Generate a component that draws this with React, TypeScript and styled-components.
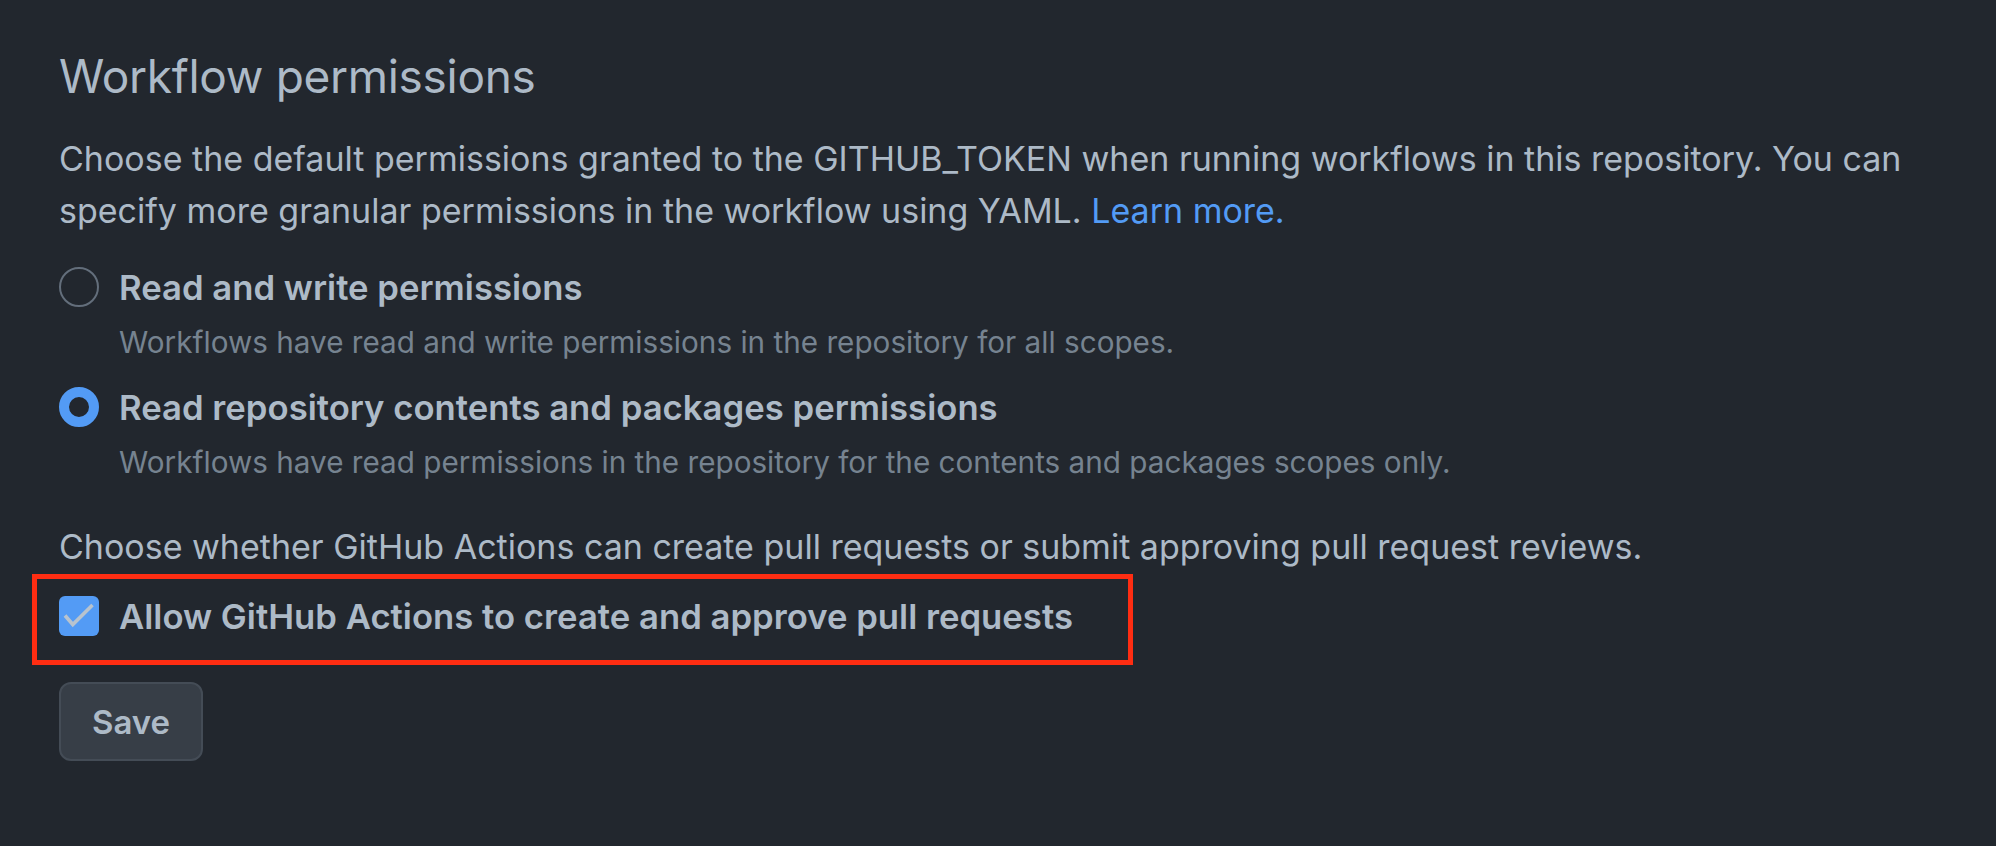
import React, { useState } from "react";
import styled, { createGlobalStyle } from "styled-components";

const COLORS = {
  bg: "#22272e",
  fg: "#adbac7",
  muted: "#768390",
  accent: "#539bf5",
  border: "#444c56",
  btn: "#373e47",
  annotate: "#ff2d12",
};

const GlobalStyle = createGlobalStyle`
  html, body {
    margin: 0;
    padding: 0;
    background: ${COLORS.bg};
  }
  body {
    font-family: Inter, "Noto Sans", "Liberation Sans", sans-serif;
    color: ${COLORS.fg};
    min-height: 846px;
  }
`;

const options = [
  {
    id: "write",
    label: "Read and write permissions",
    note: "Workflows have read and write permissions in the repository for all scopes.",
  },
  {
    id: "read",
    label: "Read repository contents and packages permissions",
    note: "Workflows have read permissions in the repository for the contents and packages scopes only.",
  },
];

export default function App() {
  const [permission, setPermission] = useState("read");
  const [allowPr, setAllowPr] = useState(true);

  return (
    <>
      <GlobalStyle />
      <Page>
        <Title>Workflow permissions</Title>
        <Description>
          Choose the default permissions granted to the GITHUB_TOKEN when running workflows in this
          repository. You can specify more granular permissions in the workflow using YAML.{" "}
          <Link href="#">Learn more.</Link>
        </Description>

        <RadioGroup>
          {options.map((opt) => (
            <Option key={opt.id} $first={opt.id === "write"}>
              <OptionRow onClick={() => setPermission(opt.id)}>
                <Radio $checked={permission === opt.id} />
                <OptionLabel>{opt.label}</OptionLabel>
              </OptionRow>
              <Note>{opt.note}</Note>
            </Option>
          ))}
        </RadioGroup>

        <Description $gap={37}>
          Choose whether GitHub Actions can create pull requests or submit approving pull request reviews.
        </Description>

        <Highlight>
          <CheckRow onClick={() => setAllowPr(!allowPr)}>
            <Checkbox $checked={allowPr}>
              {allowPr && (
                <svg width="40" height="40" viewBox="0 0 40 40">
                  <path
                    d="M6 19.5 L13.8 28.5 L33.5 9"
                    fill="none"
                    stroke="#b8c3ce"
                    strokeWidth="3.6"
                  />
                </svg>
              )}
            </Checkbox>
            <OptionLabel>Allow GitHub Actions to create and approve pull requests</OptionLabel>
          </CheckRow>
        </Highlight>

        <SaveButton>Save</SaveButton>
      </Page>
    </>
  );
}

const Page = styled.main`
  display: flex;
  flex-direction: column;
  align-items: flex-start;
  padding: 45px 59px 0 59px;
  max-width: 1878px;
`;

const Title = styled.h2`
  margin: 0;
  font-size: 46px;
  line-height: 62px;
  font-weight: 400;
  letter-spacing: -0.3px;
`;

const Description = styled.p<{ $gap?: number }>`
  margin: ${(p) => p.$gap ?? 26}px 0 0 0;
  font-size: 34px;
  line-height: 52px;
`;

const Link = styled.a`
  color: ${COLORS.accent};
  text-decoration: none;
`;

const RadioGroup = styled.div`
  display: flex;
  flex-direction: column;
  margin-top: 24px;
`;

const Option = styled.div<{ $first?: boolean }>`
  display: flex;
  flex-direction: column;
  margin-top: ${(p) => (p.$first ? 0 : 17)}px;
`;

const OptionRow = styled.label`
  display: flex;
  align-items: center;
  gap: 20px;
  cursor: pointer;
`;

const Radio = styled.span<{ $checked: boolean }>`
  box-sizing: border-box;
  flex: none;
  width: 40px;
  height: 40px;
  border-radius: 50%;
  background: ${COLORS.bg};
  border: ${(p) => (p.$checked ? `10px solid ${COLORS.accent}` : "2px solid #636e7b")};
`;

const OptionLabel = styled.span`
  font-size: 34.7px;
  line-height: 52px;
  font-weight: 600;
`;

const Note = styled.div`
  margin: 7px 0 0 60px;
  font-size: 29.7px;
  line-height: 44px;
  color: ${COLORS.muted};
`;

const Highlight = styled.div`
  display: flex;
  margin: 1px 0 0 -27px;
  padding: 11px 55px 18px 22px;
  border: 5px solid ${COLORS.annotate};
`;

const CheckRow = styled.label`
  display: flex;
  align-items: center;
  gap: 20px;
  cursor: pointer;
`;

const Checkbox = styled.span<{ $checked: boolean }>`
  box-sizing: border-box;
  flex: none;
  width: 40px;
  height: 40px;
  border-radius: 6px;
  background: ${(p) => (p.$checked ? COLORS.accent : "transparent")};
  border: ${(p) => (p.$checked ? "none" : "2px solid #636e7b")};
  display: flex;

  svg {
    display: block;
  }
`;

const SaveButton = styled.button`
  box-sizing: border-box;
  margin-top: 17px;
  height: 79px;
  padding: 0 31px;
  display: inline-flex;
  align-items: center;
  border-radius: 12px;
  border: 2px solid ${COLORS.border};
  background: ${COLORS.btn};
  color: ${COLORS.fg};
  font-family: Inter, "Noto Sans", "Liberation Sans", sans-serif;
  font-size: 33px;
  font-weight: 600;
  cursor: pointer;
`;
